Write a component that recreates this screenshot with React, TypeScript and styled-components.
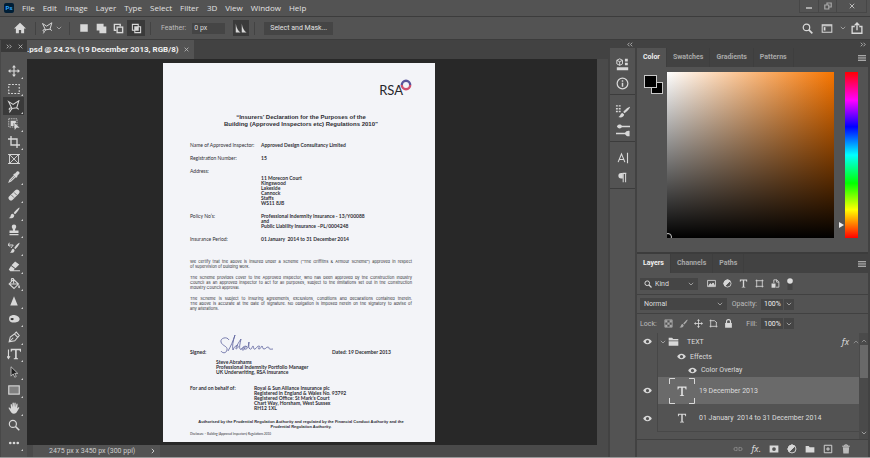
import React from "react";
import styled, { createGlobalStyle, css } from "styled-components";

const ui = 'Roboto, "Noto Sans", sans-serif';
const humanist = '"Open Sans", "Noto Sans", sans-serif';
const arial = '"Liberation Sans", Arial, sans-serif';

const c = {
  bar: "#535353",
  dark: "#424242",
  edge: "#3c3c3c",
  field: "#454545",
  canvas: "#282828",
  text: "#dcdcdc",
  dim: "#bcbcbc",
  icon: "#d8d8d8",
};

const Global = createGlobalStyle`
  *, *::before, *::after { box-sizing: border-box; }
  body { margin: 0; background: ${c.bar}; color: ${c.text}; font: 7px/12px ${ui}; }
  button, input, select { font: inherit; color: inherit; margin: 0; padding: 0; border: 0; background: none; border-radius: 0; }
  h1, p, dl, dd, dt { margin: 0; padding: 0; }
  svg { display: block; flex: none; }
`;

const Shell = styled.div`
  display: flex;
  flex-direction: column;
  min-height: 100vh;
  background: ${c.bar};
  border-bottom: 1px solid #989898;
`;

const MenuBar = styled.header`
  display: flex;
  align-items: center;
  height: 17px;
  padding-left: 4px;
  border-bottom: 1px solid ${c.edge};
`;

const AppBadge = styled.span`
  width: 10px;
  height: 10px;
  margin-right: 8px;
  border-radius: 2px;
  background: #001e36;
  color: #31a8ff;
  font-size: 6px;
  line-height: 10px;
  font-weight: 700;
  text-align: center;
`;

const MenuList = styled.nav`
  display: flex;
  flex: 1;
  gap: 8px;
`;

const MenuButton = styled.button`
  font: 8px/12px ${humanist};
  color: #e2e2e2;
`;

const WindowButtons = styled.div`
  display: flex;
  align-self: flex-start;
  height: 13px;
  margin-right: 3px;
  border: 1px solid #474747;
  border-top: 0;
`;

const WindowButton = styled.button<{ $wide?: boolean }>`
  display: grid;
  place-items: center;
  width: ${(p) => (p.$wide ? 30 : 18)}px;
  border-left: 1px solid #474747;
  &:first-child { border-left: 0; }
`;

const OptionsBar = styled.div`
  display: flex;
  align-items: center;
  height: 23px;
  padding: 0 2px 0 10px;
  border-bottom: 1px solid ${c.edge};
`;

const Rule = styled.span`
  width: 1px;
  height: 13px;
  margin: 0 5px;
  background: #434343;
`;

const IconButton = styled.button<{ $on?: boolean; $w?: number }>`
  display: grid;
  place-items: center;
  width: ${(p) => p.$w ?? 18}px;
  height: 16px;
  background: ${(p) => (p.$on ? "#3a3a3a" : "transparent")};
`;

const FeatherLabel = styled.label`
  display: flex;
  align-items: center;
  gap: 6px;
  padding: 0 8px 0 5px;
  color: ${c.dim};
`;

const FeatherInput = styled.input`
  width: 33px;
  height: 11px;
  padding-left: 2px;
  background: ${c.field};
  color: ${c.text};
`;

const MaskButton = styled.button`
  height: 13px;
  margin-left: 4px;
  padding: 0 6px;
  background: ${c.field};
  color: #e2e2e2;
  line-height: 13px;
`;

const Spacer = styled.span`
  flex: 1;
`;

const Workspace = styled.div`
  display: flex;
  flex: 1;
  background: ${c.dark};
`;

const ToolPanel = styled.aside`
  display: flex;
  flex-direction: column;
  width: 27px;
  background: ${c.bar};
  border-left: 1px solid #484848;
`;

const ToolHeader = styled.div`
  display: flex;
  align-items: center;
  justify-content: space-between;
  height: 12px;
  padding: 0 4px 0 5px;
  background: #393939;
`;

const ToolList = styled.div`
  display: grid;
  flex: 1;
  grid-auto-rows: 1fr;
  margin: 10px 3px 5px 2px;
`;

const ToolButton = styled.button<{ $on?: boolean; $menu?: boolean }>`
  display: grid;
  place-items: center;
  min-height: 16px;
  background: ${(p) => (p.$on ? "#3a3a3a" : "transparent")};
  ${(p) =>
    p.$menu &&
    css`
      position: relative;
      &::after {
        content: "";
        position: absolute;
        right: 1px;
        bottom: 1px;
        border: 1px solid transparent;
        border-right-color: #d0d0d0;
        border-bottom-color: #d0d0d0;
      }
    `}
`;

const DocumentArea = styled.main`
  display: flex;
  flex: 1;
  flex-direction: column;
  min-width: 0;
`;

const DocTabs = styled.div`
  display: flex;
  height: 19px;
`;

const DocTab = styled.div`
  display: flex;
  align-items: center;
  gap: 5px;
  padding-right: 5px;
  background: ${c.bar};
  color: #f0f0f0;
  font: 700 8px/12px ${ui};
  white-space: nowrap;
`;

const CanvasRow = styled.div`
  display: flex;
  flex: 1;
`;

const Canvas = styled.div`
  display: flex;
  flex: 1;
  align-items: flex-start;
  justify-content: center;
  padding: 4px 26px 3px 0;
  background: ${c.canvas};
`;

const ScrollTrack = styled.div`
  width: 11px;
  background: #4a4a4a;
`;

const StatusBar = styled.footer`
  display: flex;
  align-items: center;
  height: 12px;
  background: #4a4a4a;
`;

const StatusText = styled.div`
  display: flex;
  align-items: center;
  justify-content: space-between;
  width: 127px;
  height: 12px;
  margin-left: 6px;
  padding: 0 5px 0 16px;
  background: ${c.bar};
  color: #cfcfcf;
`;

/* Scanned letter */
const Paper = styled.article`
  width: 272px;
  padding: 16px 23px 5px 27px;
  background: #f3f4f8;
  color: #2e2e34;
  font: 5px/5px Lato, ${arial};
`;

const Brand = styled.div`
  display: flex;
  justify-content: flex-end;
  height: 35px;
`;

const BrandName = styled.span`
  margin-right: -3px;
  padding-top: 5px;
  font: 13px/13px Lato, sans-serif;
  color: #26262c;
`;

const Title = styled.h1`
  margin-bottom: 15px;
  font: 700 6px/7px ${arial};
  text-align: center;
`;

const Facts = styled.dl`
  display: grid;
  grid-template-columns: 71px 1fr;
  row-gap: 8px;
`;

const FactValue = styled.dd<{ $lower?: boolean }>`
  font-weight: 700;
  white-space: pre-line;
  padding-top: ${(p) => (p.$lower ? 7 : 0)}px;
`;

const Clauses = styled.section`
  display: flex;
  flex-direction: column;
  gap: 6px;
  margin-top: 17px;
  font-family: Inter, ${arial};
  font-size: 4px;
`;

const ClauseLine = styled.span<{ $last?: boolean }>`
  display: block;
  white-space: nowrap;
  text-align-last: ${(p) => (p.$last ? "left" : "justify")};
`;

const SignRow = styled.div`
  display: grid;
  grid-template-columns: 26px 1fr 80px;
  align-items: end;
  margin-top: 22px;
  font-weight: 700;
`;

const Signatory = styled.p`
  margin: 5px 0 11px 26px;
  font-weight: 700;
  white-space: pre-line;
`;

const Behalf = styled.div`
  display: grid;
  grid-template-columns: 64px 1fr;
  font-weight: 700;
  white-space: pre-line;
`;

const Authority = styled.p`
  margin: 8px 0 3px;
  font: 700 4px/5px ${arial};
  text-align: center;
  white-space: nowrap;
`;

const Footnote = styled.p`
  font-size: 3px;
`;

/* Right dock */
const Dock = styled.aside`
  display: flex;
  flex-direction: column;
  width: 262px;
  padding: 0 2px;
  background: ${c.dark};
`;

const DockHeader = styled.div`
  display: flex;
  align-items: center;
  justify-content: space-between;
  height: 8px;
  padding: 0 2px 0 17px;
`;

const DockBody = styled.div`
  display: flex;
  flex: 1;
  gap: 2px;
`;

const IconColumn = styled.div`
  display: flex;
  flex-direction: column;
  width: 25px;
  background: ${c.bar};
`;

const IconGroup = styled.div`
  display: flex;
  flex-direction: column;
  align-items: center;
  gap: 3px;
  padding: 8px 0 3px;
  border-bottom: 1px solid ${c.edge};
`;

const Panels = styled.div`
  display: flex;
  flex: 1;
  flex-direction: column;
  gap: 2px;
  min-width: 0;
  background: ${c.edge};
`;

const Panel = styled.section<{ $grow?: boolean }>`
  display: flex;
  flex-direction: column;
  flex: ${(p) => (p.$grow ? 1 : "none")};
  background: ${c.bar};
`;

const PanelTabs = styled.div`
  display: flex;
  align-items: center;
  height: 19px;
  padding-right: 2px;
  background: ${c.dark};
`;

const PanelTab = styled.button<{ $on?: boolean }>`
  height: 19px;
  padding: 0 6px;
  border-right: 1px solid #3e3e3e;
  background: ${(p) => (p.$on ? c.bar : "transparent")};
  color: ${(p) => (p.$on ? "#f0f0f0" : "#a8a8a8")};
  line-height: 17px;
  font-weight: 700;
`;

const ColorBody = styled.div`
  display: flex;
  gap: 3px;
  padding: 5px 10px 14px 7px;
`;

const Field = styled.div`
  position: relative;
  flex: 1;
  height: 166px;
  overflow: hidden;
  background: linear-gradient(to bottom, transparent, #000),
    linear-gradient(to right, #fff, #f77500);
`;

const FieldMarker = styled.span`
  position: absolute;
  left: -3px;
  bottom: -3px;
  width: 8px;
  height: 8px;
  border: 1px solid #ccc;
  border-radius: 50%;
`;

const Hue = styled.div`
  position: relative;
  width: 13px;
  height: 166px;
  margin-left: 8px;
  background: linear-gradient(to bottom, #f00, #f0f 17%, #00f 33%, #0ff 50%, #0f0 67%, #ff0 83%, #f00);
`;

const HuePointer = styled.span`
  position: absolute;
  left: -6px;
  top: 150px;
  border: 3px solid transparent;
  border-left: 5px solid #eee;
  border-right: 0;
`;

const Controls = styled.div<{ $tall?: boolean; $plain?: boolean }>`
  display: flex;
  align-items: center;
  height: ${(p) => (p.$tall ? 22 : 19)}px;
  padding: 0 3px;
  border-bottom: ${(p) => (p.$plain ? "0" : "1px solid #414141")};
`;

const SelectBox = styled.label<{ $w: number }>`
  display: flex;
  align-items: center;
  gap: 3px;
  width: ${(p) => p.$w}px;
  height: 12px;
  padding: 0 4px;
  background: ${c.field};
`;

const Select = styled.select`
  flex: 1;
  min-width: 0;
  appearance: none;
  outline: 0;
  line-height: 12px;
`;

const GlyphRow = styled.div<{ $gap: number; $start: number }>`
  display: flex;
  align-items: center;
  gap: ${(p) => p.$gap}px;
  padding-left: ${(p) => p.$start}px;
  button { display: grid; }
`;

const Amount = styled.label`
  display: flex;
  align-items: center;
  gap: 4px;
  color: ${c.dim};
`;

const AmountInput = styled.input`
  width: 22px;
  height: 11px;
  padding-left: 3px;
  background: ${c.field};
  color: #eee;
`;

const AmountButton = styled.button`
  display: grid;
  place-items: center;
  width: 10px;
  height: 11px;
  margin: 0 71px 0 1px;
  background: ${c.field};
`;

const LayerArea = styled.div`
  display: flex;
  flex: 1;
`;

const LayerList = styled.div`
  flex: 1;
`;

const LayerRow = styled.div<{ $h: number }>`
  display: flex;
  height: ${(p) => p.$h}px;
`;

const EyeCell = styled.button`
  display: grid;
  place-items: center;
  width: 21px;
  border-right: 1px solid #474747;
`;

const LayerBody = styled.div<{ $on?: boolean; $indent: number; $line?: boolean }>`
  display: flex;
  flex: 1;
  align-items: center;
  padding-left: ${(p) => p.$indent}px;
  background: ${(p) => (p.$on ? "#6a6a6a" : "transparent")};
  border-bottom: ${(p) => (p.$line ? "1px solid #484848" : "0")};
  white-space: pre;
`;

const LayerName = styled.span<{ $gap?: number }>`
  flex: 1;
  margin-left: ${(p) => p.$gap ?? 4}px;
`;

const Thumb = styled.span`
  display: grid;
  place-items: center;
  width: 26px;
  height: 26px;
`;

const FolderSlot = styled.span`
  margin-left: 2px;
`;

const FxEnd = styled.span`
  margin-left: 4px;
`;

const LayerScroll = styled.div`
  display: flex;
  flex-direction: column;
  align-items: center;
  width: 9px;
  padding: 6px 0 4px;
  background: #4a4a4a;
`;

const ScrollThumb = styled.span`
  width: 8px;
  height: 33px;
  margin: 2px 0 auto;
  background: #696969;
`;

const LayerFooter = styled.div`
  display: flex;
  align-items: center;
  justify-content: flex-end;
  gap: 8px;
  height: 18px;
  padding-right: 17px;
  border-top: 1px solid #414141;
  button { display: grid; }
`;

const FxGlyph = styled.span`
  font: italic 9px/12px "Noto Sans", sans-serif;
  color: #d8d8d8;
`;

type IconProps = { size?: number; children: React.ReactNode; fill?: boolean; w?: number; box?: string };
const Ico = ({ size = 12, w, children, fill, box = "0 0 16 16" }: IconProps) => (
  <svg
    width={w ?? size}
    height={size}
    viewBox={box}
    fill={fill ? c.icon : "none"}
    stroke={fill ? "none" : c.icon}
    strokeWidth="1.5"
    aria-hidden="true"
  >
    {children}
  </svg>
);

const Down = () => (
  <Ico size={4} w={6} box="0 0 6 4"><path d="M.8.8 3 3 5.200.8" strokeWidth=".9" stroke="#a5a5a5" /></Ico>
);
const Up = () => (
  <Ico size={4} w={6} box="0 0 6 4"><path d="M.8 3.200 3 1 5.200 3.200" strokeWidth=".9" stroke="#909090" /></Ico>
);
const Chevrons = ({ left }: { left?: boolean }) => (
  <Ico size={5} w={6} box="0 0 6 5">
    <path d={left ? "M2.500.7.8 2.500l1.700 1.800M5.200.7 3.500 2.500l1.700 1.800" : "M.8.7l1.700 1.800L.8 4.300M3.500.7l1.700 1.800-1.700 1.800"} strokeWidth=".9" stroke="#b4b4b4" />
  </Ico>
);
const Cross = ({ size = 6 }: { size?: number }) => (
  <Ico size={size} box="0 0 8 8"><path d="M1 1l6 6M7 1 1 7" strokeWidth="1.300" stroke="#bdbdbd" /></Ico>
);
const Burger = () => (
  <Ico size={6} w={8} box="0 0 8 6"><path d="M0 .5h8M0 2.200h8M0 3.900h8M0 5.500h8" strokeWidth="1" stroke="#a8a8a8" /></Ico>
);
const Eye = () => (
  <Ico size={7} w={9} box="0 0 20 14" fill>
    <path fillRule="evenodd" d="M10 1C5 1 1.800 4.200.5 7 1.800 9.800 5 13 10 13s8.200-3.200 9.500-6C18.200 4.200 15 1 10 1Zm0 2.500a3.600 3.600 0 1 1 0 7.200 3.600 3.600 0 0 1 0-7.200Z" />
  </Ico>
);
const TypeGlyph = ({ size = 10 }: { size?: number }) => (
  <Ico size={size} fill><path d="M1.500 1h13v4h-1.200c-.3-1.700-.8-2.300-2.300-2.300H9.200v10c0 1 .4 1.200 2 1.300v1H4.800v-1c1.600-.1 2-.3 2-1.300v-10H5C3.500 2.700 3 3.300 2.700 5H1.500V1Z" /></Ico>
);
const Lasso = ({ size = 13 }: { size?: number }) => (
  <Ico size={size}><path d="M2 2l5.500 3.500L14.500 1 12 9.500 6 10.500 2 2ZM6 10.500c-2-1.500-4 .2-3 1.500 1 1.200 3 .2 3-1.500Zm-2 2c.5 1 0 2-1.500 2.700M12 9.500l2.500 2" strokeWidth="1.300" /></Ico>
);
const MoveGlyph = ({ size = 12 }: { size?: number }) => (
  <Ico size={size}>
    <path d="M8 2v12M2 8h12" />
    <path d="M8 0l2.600 3.200H5.400L8 0Zm0 16 2.600-3.200H5.400L8 16ZM0 8l3.200-2.600v5.200L0 8Zm16 0-3.200-2.600v5.200L16 8Z" fill={c.icon} stroke="none" />
  </Ico>
);
const BrushGlyph = ({ size = 12, tint = c.icon }: { size?: number; tint?: string }) => (
  <Ico size={size}><path fill={tint} stroke="none" d="M15.300.7c-1.600.3-6.500 5.500-7.800 7.400l1.800 1.700C11.200 8.300 15.800 2.600 15.300.7ZM6.600 9.100C4.200 9 3.700 11 3.300 12.300 2.900 13.700 2 14.300.8 14.500c2.700 1.300 7.400.6 7.600-3.600L6.600 9.100Z" /></Ico>
);
const SearchGlyph = ({ size = 12, stroke = 1.6 }: { size?: number; stroke?: number }) => (
  <Ico size={size}><circle cx="6.500" cy="6.500" r="4.700" strokeWidth={stroke} /><path d="m10 10 5 5" strokeWidth={stroke + 0.6} /></Ico>
);
const FolderGlyph = ({ size = 10 }: { size?: number }) => (
  <Ico size={size} fill><path d="M1 3h5l1.500 2H15v8.500H1V3Z" /></Ico>
);
const OpenFolder = () => (
  <Ico size={11} fill><path d="M1 2.500h5l1.500 2H15v2H1ZM1 7.500h14V14H1Z" /></Ico>
);
const HalfCircle = ({ size = 10 }: { size?: number }) => (
  <Ico size={size}><circle cx="8" cy="8" r="6.300" /><path d="M12.500 3.500a6.300 6.300 0 0 0-9 9Z" fill={c.icon} /></Ico>
);

const tools: { label: string; art: React.ReactNode; menu?: boolean }[] = [
  { label: "Move", menu: true, art: <MoveGlyph /> },
  { label: "Rectangular marquee", menu: true, art: <Ico><rect x="1" y="2" width="14" height="12" strokeDasharray="2.500 1.800" /></Ico> },
  { label: "Polygonal lasso", menu: true, art: <Lasso /> },
  { label: "Object selection", menu: true, art: <Ico><rect x="1" y="1" width="11" height="11" strokeDasharray="2 1" strokeWidth="1" /><path d="M3.500 3.500h7v3h-3v4h-4Z" fill={c.icon} stroke="none" /><path d="m8 6 7.500 7-4-.2L9 16 8 6Z" fill={c.icon} stroke="none" /></Ico> },
  { label: "Crop", menu: true, art: <Ico><path d="M4 0v12h12M0 4h12v12" strokeWidth="1.800" /></Ico> },
  { label: "Frame", art: <Ico><path d="M2 2h12v12H2ZM2 2l12 12M14 2 2 14M0 2h16M0 14h16" strokeWidth="1.200" /></Ico> },
  { label: "Eyedropper", menu: true, art: <Ico><path d="M9 5.500 2.500 12 1.500 14.500 4 13.500 10.500 7" /><path d="M8 3.500l1.500-.3 2.300-2.400c2-1.500 4.500 1 3.200 3l-2.500 2.500-.2 1.700-1.300 1L7 5Z" fill={c.icon} stroke="none" /></Ico> },
  { label: "Healing brush", menu: true, art: <Ico><path d="M4 12 12 4" strokeWidth="6.500" strokeLinecap="round" /><path d="m4.500 8 3.500 3.500M8 4.500 11.500 8" stroke={c.bar} strokeWidth="1" /></Ico> },
  { label: "Brush", menu: true, art: <BrushGlyph /> },
  { label: "Clone stamp", menu: true, art: <Ico fill><path d="M6.800 8.500C6.500 6 5 5 5 3.500a3 3 0 0 1 6 0C11 5 9.500 6 9.200 8.500H14V12H2V8.500ZM2 13.200h12V15H2Z" /></Ico> },
  { label: "History brush", menu: true, art: <Ico><path d="M15.300 1c-2 .3-5.500 4.500-7 7l1.500 1.700C11.800 7.500 15.800 3 15.300 1ZM7 9c-2.500.3-2 4-4.500 5 3 1 6.500 0 6.200-3.500Z" fill={c.icon} stroke="none" /><path d="M0 4h7L4 8M2 1 0 4l3 2" strokeWidth="1.300" /></Ico> },
  { label: "Eraser", menu: true, art: <Ico fill><path d="M9.500 2 15 6 10 11 4.700 7ZM4 8l5 3.800L7.500 13.500H16V15H3L1 12.500Z" /></Ico> },
  { label: "Paint bucket", menu: true, art: <Ico><path d="M7.500 2 14 8l-6 6-6.500-6ZM2 8h11M7.500 7V2c0-2-3-2-3 0v3" strokeWidth="1.400" /><path d="M14.500 9c1.800 2.500 1.800 4.500.3 4.500s-1.500-2-.3-4.500Z" fill={c.icon} stroke="none" /></Ico> },
  { label: "Sharpen", menu: true, art: <Ico fill><path d="M8 1.500 13 14H3Z" /></Ico> },
  { label: "Sponge", menu: true, art: <Ico><path d="M5.500 3C8 2 15 4 15.500 8c.2 4-6 5.500-10 4.500A4.800 4.800 0 0 1 5.500 3Z" fill={c.icon} stroke="none" /><ellipse cx="5.500" cy="8" rx="2.200" ry="1.500" fill="#333" stroke="none" /></Ico> },
  { label: "Pen", menu: true, art: <Ico><path d="M1.500 14.500 3 8l5.500-4L13 8.500 9 13l-7.500 1.500ZM2 14l5-5M9 3.500l2-2L15 6l-2 2.500" strokeWidth="1.400" /></Ico> },
  { label: "Vertical type", menu: true, art: <Ico w={14} box="-3 0 19 16"><g fill={c.icon} stroke="none"><path d="M2 1h14v4h-1.200c-.3-1.500-.8-2-2.300-2h-2.300v9.500c0 1 .4 1.200 1.800 1.300V15H6.200v-1.200c1.400-.1 1.800-.3 1.800-1.300V3H5.600c-1.500 0-2 .5-2.400 2H2Z" /></g><path d="M-1 2v12m-2-3 2 3 2-3" /></Ico> },
  { label: "Direct selection", menu: true, art: <Ico><path d="M4 1v12.500l3-3 2 4.500 2-1-2-4.200h4Z" fill="#202020" strokeWidth="1" /></Ico> },
  { label: "Rectangle", menu: true, art: <Ico><rect x="1" y="2.500" width="14" height="11" fill="#808080" /></Ico> },
  { label: "Hand", menu: true, art: <Ico fill><path d="M4 9 3.500 3.500c0-1.300 1.500-1.300 1.700 0L6 7V1.800C6 .5 7.700.5 7.800 1.800L8 7l.5-5.500C8.700.3 10.200.4 10.200 1.700V7l1-4c.3-1.300 1.800-1 1.600.3L12.300 8.500l1.200-1.300c1-.8 2 .1 1.300 1.100l-3 5C11 15 9.500 15.500 8 15.500c-3 0-4-2-5.200-4L1 8.700C.4 7.500 1.500 7 2.400 7.700Z" /></Ico> },
  { label: "Zoom", art: <SearchGlyph size={12} /> },
  { label: "More tools", menu: true, art: <Ico fill><circle cx="3" cy="8" r="1.800" /><circle cx="8" cy="8" r="1.800" /><circle cx="13" cy="8" r="1.800" /></Ico> },
];

const clauses = [
  [
    "We certify that the above is insured under a Scheme (“The Griffiths & Armour Scheme”) approved in respect",
    "of supervision of building work.",
  ],
  [
    "The Scheme provides cover to the Approved Inspector, who has been approved by the Construction Industry",
    "Council as an approved inspector to act for all purposes, subject to the limitations set out in the Construction",
    "Industry Council approval.",
  ],
  [
    "The Scheme is subject to insuring agreements, exclusions, conditions and declarations contained therein.",
    "The above is accurate at the date of signature.  No obligation is imposed herein on the signatory to advise of",
    "any alterations.",
  ],
];

const Letter = () => (
  <Paper>
    <Brand>
      <BrandName>RSA</BrandName>
      <svg width="12" height="12" viewBox="0 0 12 12" fill="none" strokeWidth="2.400" aria-hidden="true">
        <path d="M1.800 6a4.200 4.200 0 0 1 8.400 0" stroke="#5b559b" />
        <path d="M10.200 6a4.200 4.200 0 0 1-8.400 0" stroke="#d0506e" />
      </svg>
    </Brand>
    <Title>
      “Insurers’ Declaration for the Purposes of the
      <br />
      Building (Approved Inspectors etc) Regulations 2010”
    </Title>
    <Facts>
      <dt>Name of Approved Inspector:</dt>
      <FactValue>Approved Design Consultancy Limited</FactValue>
      <dt>Registration Number:</dt>
      <FactValue>15</FactValue>
      <dt>Address:</dt>
      <FactValue $lower>{"11 Morecon Court\nKingswood\nLakeside\nCannock\nStaffs\nWS11 8JB"}</FactValue>
      <dt>Policy No’s:</dt>
      <FactValue>{"Professional Indemnity Insurance - 13/Y00088\nand\nPublic Liability Insurance –PL/0004248"}</FactValue>
      <dt>Insurance Period:</dt>
      <FactValue>01 January&nbsp; 2014 to 31 December 2014</FactValue>
    </Facts>
    <Clauses>
      {clauses.map((lines) => (
        <p key={lines[0]}>
          {lines.map((line, i) => (
            <ClauseLine key={line} $last={i === lines.length - 1}>{line}</ClauseLine>
          ))}
        </p>
      ))}
    </Clauses>
    <SignRow>
      <span>Signed:</span>
      <svg width="64" height="22" viewBox="0 0 64 22" fill="none" stroke="#5a5f9c" strokeWidth=".8" aria-label="Signature">
        <path d="M13 7C11 3 4 5 5 9s7 4 6 8-5 3-6 1M12 18C15 13 17 8 19 2c-2 6-3 11-2 15 1-3 4-6 5-4s-3 4-2 2c1-3 3-6 5-9-1 5-2 8-1 10s3-3 4-1-2 3-2 1 4-4 5-2c-3-1-4 3-1 2s2-4 3-7c0 4-1 6 1 7s2-3 3-3 0 4 2 3 2-3 4-3-2 3 0 3 2-3 3-3 0 3 2 3 2-2 4-2-1 3 5 2" />
      </svg>
      <span>Dated: 19 December 2013</span>
    </SignRow>
    <Signatory>{"Steve Abrahams\nProfessional Indemnity Portfolio Manager\nUK Underwriting, RSA Insurance"}</Signatory>
    <Behalf>
      <span>For and on behalf of:</span>
      <span>{"Royal & Sun Alliance Insurance plc\nRegistered in England & Wales No. 93792\nRegistered Office: St Mark’s Court\nChart Way, Horsham, West Sussex\nRH12 1XL"}</span>
    </Behalf>
    <Authority>
      Authorised by the Prudential Regulation Authority and regulated by the Financial Conduct Authority and the
      <br />
      Prudential Regulation Authority.
    </Authority>
    <Footnote>Disclosure – Building (Approved Inspectors) Regulations 2010</Footnote>
  </Paper>
);

const EyeButton = ({ on = true, label }: { on?: boolean; label: string }) => (
  <EyeCell aria-label={label}>{on && <Eye />}</EyeCell>
);

export default function App() {
  return (
    <Shell>
      <Global />
      <MenuBar>
        <AppBadge>Ps</AppBadge>
        <MenuList>
          {["File", "Edit", "Image", "Layer", "Type", "Select", "Filter", "3D", "View", "Window", "Help"].map((m) => (
            <MenuButton key={m}>{m}</MenuButton>
          ))}
        </MenuList>
        <WindowButtons>
          <WindowButton aria-label="Minimize"><Ico size={8} box="0 0 8 8"><path d="M1 6h6" strokeWidth="2" stroke="#aaa" /></Ico></WindowButton>
          <WindowButton aria-label="Restore"><Ico size={8} box="0 0 8 8"><path d="M.8 3h4v4h-4ZM3 3V1h4.200v4H5" strokeWidth="1.200" stroke="#aaa" /></Ico></WindowButton>
          <WindowButton $wide aria-label="Close"><Cross /></WindowButton>
        </WindowButtons>
      </MenuBar>

      <OptionsBar>
        <IconButton $w={20} aria-label="Home"><Ico fill size={12}><path d="M8 1 0 8.500h2.500V15H6.500v-4.500h3V15h4V8.500H16Z" /></Ico></IconButton>
        <Rule />
        <IconButton $w={12} aria-label="Polygonal lasso presets"><Lasso size={12} /></IconButton>
        <IconButton $w={11} aria-label="Open presets"><Down /></IconButton>
        <Rule />
        <IconButton aria-label="New selection"><Ico fill size={10}><rect x="2" y="2" width="12" height="12" /></Ico></IconButton>
        <IconButton $w={16} aria-label="Add to selection"><Ico fill size={11}><path d="M1 1h10v4h4v10H5v-4H1Z" /></Ico></IconButton>
        <IconButton aria-label="Subtract from selection"><Ico size={11}><path d="M5 10.500H2V2h8.500v3" strokeWidth="2" /><rect x="6" y="6" width="8" height="8" strokeWidth="2" /></Ico></IconButton>
        <IconButton $on aria-label="Intersect with selection"><Ico size={11}><path d="M2 2h8.500v8.500H2Z" /><path d="M5.500 5.500H14V14H5.500Z" /><path d="M6.500 6.500h3v3h-3Z" fill={c.icon} /></Ico></IconButton>
        <Rule />
        <FeatherLabel>Feather:<FeatherInput defaultValue="0 px" /></FeatherLabel>
        <IconButton $on $w={16} aria-label="Anti-alias"><Ico fill size={12}><path d="M1 2v12h6.500C4 12 2 8 1 2Zm8 0v12h6.500C12 12 10 8 9 2Z" /></Ico></IconButton>
        <Rule />
        <MaskButton>Select and Mask...</MaskButton>
        <Spacer />
        <IconButton $w={14} aria-label="Search"><SearchGlyph size={11} stroke={1.8} /></IconButton>
        <IconButton $w={26} aria-label="Workspace"><Ico size={11} w={12}><path d="M1 2.500h14v11H1Z" /><path d="M1 4h14" /><path d="M4.500 6v5" strokeWidth="2.500" /></Ico></IconButton>
        <Down />
        <IconButton $w={22} aria-label="Share"><Ico size={12}><path d="M5 6H1.500v9h13V6H11M8 11V2M4.800 4.500 8 1.300l3.200 3.200" strokeWidth="1.800" /></Ico></IconButton>
      </OptionsBar>

      <Workspace>
        <ToolPanel>
          <ToolHeader><Chevrons /><Cross size={5} /></ToolHeader>
          <ToolList>
            {tools.map((t) => (
              <ToolButton key={t.label} aria-label={t.label} $menu={t.menu} $on={t.label === "Polygonal lasso"}>{t.art}</ToolButton>
            ))}
          </ToolList>
        </ToolPanel>

        <DocumentArea>
          <DocTabs>
            <DocTab>.psd @ 24.2% (19 December 2013, RGB/8)<button aria-label="Close document"><Cross size={5} /></button></DocTab>
          </DocTabs>
          <CanvasRow>
            <Canvas><Letter /></Canvas>
            <ScrollTrack />
          </CanvasRow>
          <StatusBar>
            <StatusText>2475 px x 3450 px (300 ppi)<Ico size={6} w={4} box="0 0 4 6"><path d="m.8.8 2.200 2.200L.8 5.200" strokeWidth=".9" /></Ico></StatusText>
          </StatusBar>
        </DocumentArea>

        <Dock>
          <DockHeader><Chevrons left /><Chevrons /></DockHeader>
          <DockBody>
            <IconColumn>
              <IconGroup>
                <IconButton aria-label="Libraries"><Ico size={13}><path d="M4.500 1 8 2.800v4.400L4.500 9 1 7.200V2.800ZM1 2.800l3.500 1.800L8 2.800M4.500 4.600V9" strokeWidth="1.200" /><path d="M11 1h3.500v3.300H11ZM11 5.800h3.500V9H11ZM1 11.500h14V15H1Z" fill={c.icon} stroke="none" /></Ico></IconButton>
                <IconButton aria-label="Info"><Ico size={13}><circle cx="8" cy="8" r="6.600" /><path d="M8 7v5M8 4v1.700" strokeWidth="1.800" /></Ico></IconButton>
              </IconGroup>
              <IconGroup>
                <IconButton aria-label="Brush settings"><Ico size={15}><path d="M1 2h2M4 2h2M1 5h2M4 5h2M1 8h2M4 8h2" /><path d="M16 3c-2 .3-6 3.800-7.200 5.500l1.500 1.400C12.500 8.200 16 5 16 3ZM8 9.500c-2.200 0-2 3.500-4.500 4.300 3 1.200 6.200 0 6.200-2.600Z" fill={c.icon} stroke="none" /></Ico></IconButton>
                <IconButton aria-label="Brushes"><Ico size={14}><path d="M6 4h10M0 12h11" strokeWidth="1.600" /><path d="M1 4c1.500-3 5-3 6 0-1 3-4.500 3-6 0ZM10 12c1-3 4-3.500 5.500-3v6C14 15.500 11 15 10 12Z" fill={c.icon} stroke="none" /></Ico></IconButton>
              </IconGroup>
              <IconGroup>
                <IconButton aria-label="Character"><Ico size={12}><path d="M1.500 13.500 6 2.500l4.500 11M3 10h6M14 1v14" strokeWidth="1.500" /></Ico></IconButton>
                <IconButton aria-label="Paragraph"><Ico size={11}><path d="M8.500 9.500H6a4 4 0 0 1 0-8h2.500Z" fill={c.icon} stroke="none" /><path d="M9 1.500V15M12.500 1.500V15M8 2h5.500" /></Ico></IconButton>
              </IconGroup>
            </IconColumn>

            <Panels>
              <Panel>
                <PanelTabs>
                  <PanelTab $on>Color</PanelTab>
                  <PanelTab>Swatches</PanelTab>
                  <PanelTab>Gradients</PanelTab>
                  <PanelTab>Patterns</PanelTab>
                  <Spacer />
                  <Burger />
                </PanelTabs>
                <ColorBody>
                  <svg width="20" height="28" viewBox="0 0 20 28" fill="#000" stroke="#c8c8c8" aria-label="Foreground and background color">
                    <rect x="7.500" y="10.500" width="11" height="11" />
                    <rect x=".5" y="3.500" width="12" height="12" />
                  </svg>
                  <Field><FieldMarker /></Field>
                  <Hue><HuePointer /></Hue>
                </ColorBody>
              </Panel>
              <Panel $grow>
                <PanelTabs>
                  <PanelTab $on>Layers</PanelTab>
                  <PanelTab>Channels</PanelTab>
                  <PanelTab>Paths</PanelTab>
                  <Spacer />
                  <Burger />
                </PanelTabs>
                <Controls $tall>
                  <SelectBox $w={58}>
                    <SearchGlyph size={8} stroke={2} />
                    <Select aria-label="Filter type"><option>Kind</option></Select>
                    <Down />
                  </SelectBox>
                  <GlyphRow $gap={7} $start={9}>
                    <button aria-label="Pixel layers"><Ico size={9}><path d="M1 2.500h14v11H1Z" /><path d="m3 12 3-4 2 2 3-3 2.500 5Z" fill={c.icon} /></Ico></button>
                    <button aria-label="Adjustment layers"><HalfCircle size={9} /></button>
                    <button aria-label="Type layers"><TypeGlyph size={9} /></button>
                    <button aria-label="Shape layers"><Ico size={9}><path d="M3 1v14M13 1v14M1 3h14M1 13h14" /></Ico></button>
                    <button aria-label="Smart objects"><Ico size={9}><path d="M5 7V1.500h5.500L14 5v9.500H9M10 1.500V5.500h4" /><path d="M1 8h7v7.500H1Z" fill={c.icon} stroke="none" /></Ico></button>
                    <button aria-label="Toggle filter"><Ico size={12} w={6} box="0 0 6 12"><rect x=".5" y="3" width="5" height="9" fill="#454545" stroke="none" /><circle cx="3" cy="3" r="2.800" fill="#ddd" stroke="none" /></Ico></button>
                  </GlyphRow>
                </Controls>
                <Controls>
                  <SelectBox $w={87}>
                    <Select aria-label="Blend mode"><option>Normal</option></Select>
                    <Down />
                  </SelectBox>
                  <Spacer />
                  <Amount>Opacity:<AmountInput defaultValue="100%" /></Amount>
                  <AmountButton aria-label="Opacity slider"><Down /></AmountButton>
                </Controls>
                <Controls $plain>
                  <Amount as="span">Lock:</Amount>
                  <GlyphRow $gap={6} $start={7}>
                    <button aria-label="Lock transparent pixels"><Ico size={9}><path d="M1.500 1.500h13v13h-13Z" stroke="#aaa" /><path d="M2 2h4v4H2ZM10 2h4v4h-4ZM6 6h4v4H6ZM2 10h4v4H2ZM10 10h4v4h-4Z" fill="#aaa" stroke="none" /></Ico></button>
                    <button aria-label="Lock image pixels"><BrushGlyph size={9} tint="#aaa" /></button>
                    <button aria-label="Lock position"><MoveGlyph size={9} /></button>
                    <button aria-label="Lock artboard"><Ico size={9}><path d="M3 1v14M13 6v9M1 3h9M1 13h14M10 3l4 4" /></Ico></button>
                    <button aria-label="Lock all"><Ico size={9}><path d="M4.500 8V4.500a3.500 3.500 0 0 1 7 0V8" strokeWidth="2" /><path d="M2 7h12v8.500H2Z" fill={c.icon} stroke="none" /></Ico></button>
                  </GlyphRow>
                  <Spacer />
                  <Amount>Fill:<AmountInput defaultValue="100%" /></Amount>
                  <AmountButton aria-label="Fill slider"><Down /></AmountButton>
                </Controls>
                <LayerArea>
                  <LayerList>
                    <LayerRow $h={17}>
                      <EyeButton label="Toggle TEXT" />
                      <LayerBody $indent={2}><Down /><FolderSlot><OpenFolder /></FolderSlot><LayerName $gap={8}>TEXT</LayerName><FxGlyph>fx</FxGlyph><FxEnd><Up /></FxEnd></LayerBody>
                    </LayerRow>
                    <LayerRow $h={13}>
                      <EyeButton on={false} label="Effects column" />
                      <LayerBody $indent={19}><Eye /><LayerName>Effects</LayerName></LayerBody>
                    </LayerRow>
                    <LayerRow $h={14}>
                      <EyeButton on={false} label="Overlay column" />
                      <LayerBody $indent={30}><Eye /><LayerName>Color Overlay</LayerName></LayerBody>
                    </LayerRow>
                    <LayerRow $h={27}>
                      <EyeButton label="Toggle 19 December 2013" />
                      <LayerBody $on $indent={11}>
                        <Thumb><Ico size={26} box="0 0 26 26"><path d="M.5 6V.5H6M20 .5h5.500V6M25.500 20v5.500H20M6 25.500H.5V20" strokeWidth="1" /><path d="M8.500 8.500h9v3h-.8c-.2-1.200-.6-1.700-1.600-1.700h-1.300v6.600c0 .7.3.8 1.300.9v.7h-4.200v-.7c1-.1 1.300-.2 1.300-.9V9.800h-1.300c-1 0-1.400.5-1.600 1.700h-.8Z" fill="#e2e2e2" stroke="none" /></Ico></Thumb>
                        <LayerName>19 December 2013</LayerName>
                      </LayerBody>
                    </LayerRow>
                    <LayerRow $h={28}>
                      <EyeButton label="Toggle 01 January" />
                      <LayerBody $line $indent={11}><Thumb><TypeGlyph size={10} /></Thumb><LayerName>{"01 January  2014 to 31 December 2014"}</LayerName></LayerBody>
                    </LayerRow>
                  </LayerList>
                  <LayerScroll><Up /><ScrollThumb /><Down /></LayerScroll>
                </LayerArea>
                <LayerFooter>
                  <button aria-label="Link layers"><Ico size={10}><path d="M7 10.500H4a2.500 2.500 0 0 1 0-5h3M9 5.500h3a2.500 2.500 0 0 1 0 5H9M5 8h6" stroke="#8a8a8a" /></Ico></button>
                  <button aria-label="Layer style"><FxGlyph>fx.</FxGlyph></button>
                  <button aria-label="Add mask"><Ico size={10}><path fillRule="evenodd" d="M1 2.500h14v11H1ZM8 5a3 3 0 1 0 0 6 3 3 0 0 0 0-6Z" fill={c.icon} stroke="none" /></Ico></button>
                  <button aria-label="Adjustment layer"><HalfCircle size={10} /></button>
                  <button aria-label="New group"><FolderGlyph size={10} /></button>
                  <button aria-label="New layer"><Ico size={10}><path d="M2 2h12v12H2ZM8 5v6M5 8h6" /></Ico></button>
                  <button aria-label="Delete layer"><Ico size={10}><path d="M3 5h10l-.7 10H3.700Z" fill="#bbb" stroke="none" /><path d="M2 3.500h12M6 3V1.500h4V3" /></Ico></button>
                </LayerFooter>
              </Panel>
            </Panels>
          </DockBody>
        </Dock>
      </Workspace>
    </Shell>
  );
}
